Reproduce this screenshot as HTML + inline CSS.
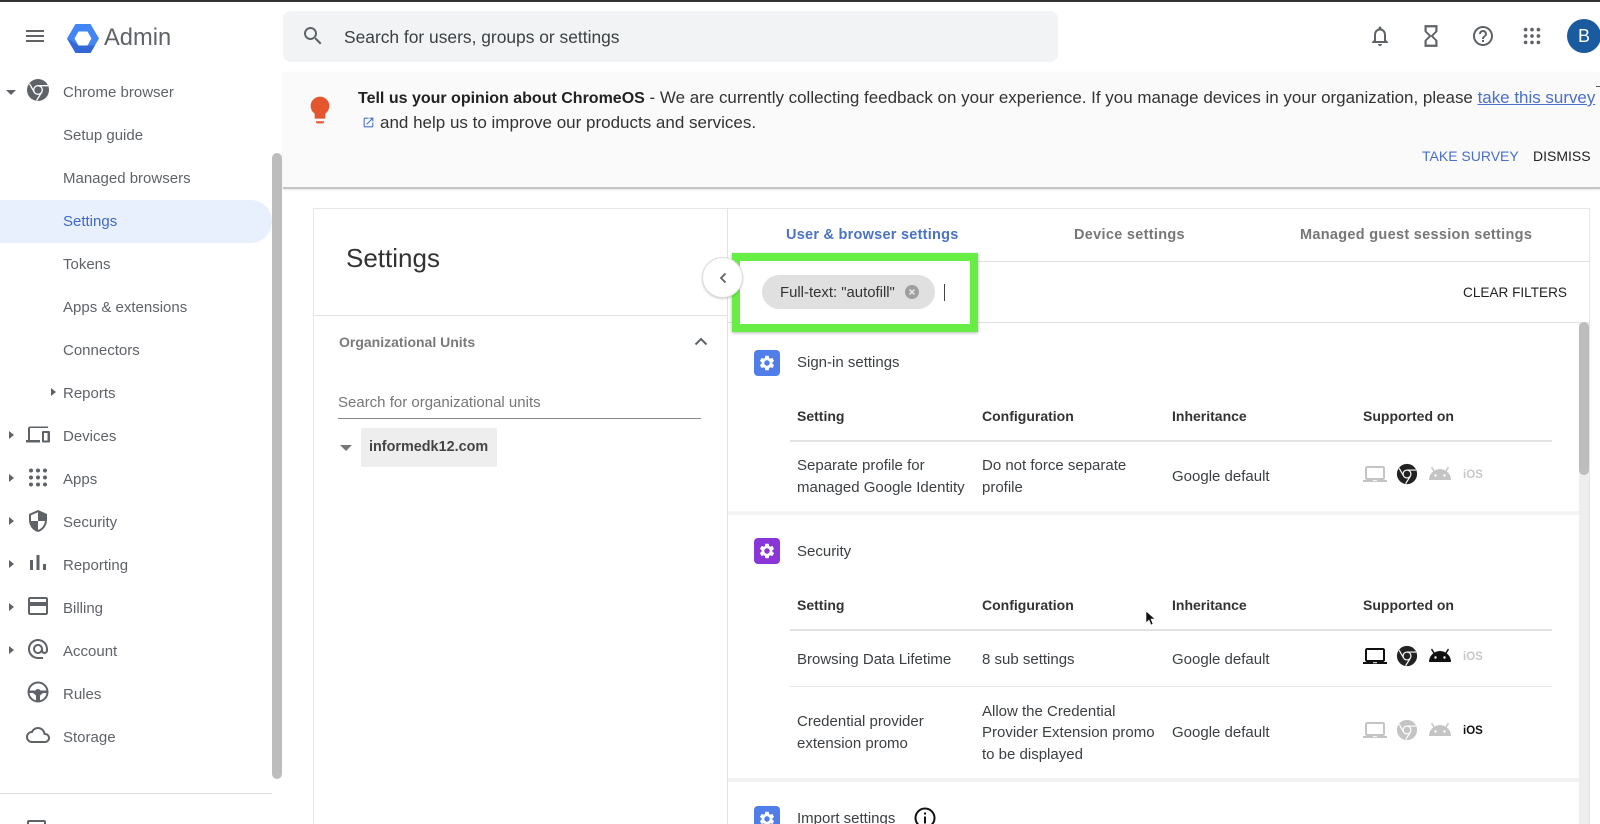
<!DOCTYPE html>
<html><head><meta charset="utf-8"><style>
html,body{margin:0;padding:0;background:#fff}
#p{position:relative;width:1600px;height:824px;overflow:hidden;background:#fff;font-family:"Liberation Sans",sans-serif;color:#444;filter:blur(.3px)}
#p div,#p span.t,#p svg{position:absolute}
.t{white-space:nowrap;line-height:20px;height:20px}
.n{font-size:15px;color:#5f6368;left:63px}
.b{font-size:15px;color:#3c4043;margin-top:1px}
.h{font-size:14px;font-weight:bold;color:#333}
.g{fill:#5f6368}
</style></head><body><div id="p">
<svg width="0" height="0"><defs>
<symbol id="gear" viewBox="0 0 24 24"><path fill="#fff" d="M19.14 12.94c.04-.3.06-.61.06-.94 0-.32-.02-.64-.07-.94l2.03-1.58c.18-.14.23-.41.12-.61l-1.92-3.32c-.12-.22-.37-.29-.59-.22l-2.39.96c-.5-.38-1.03-.7-1.62-.94l-.36-2.54c-.04-.24-.24-.41-.48-.41h-3.84c-.24 0-.43.17-.47.41l-.36 2.54c-.59.24-1.13.57-1.62.94l-2.39-.96c-.22-.08-.47 0-.59.22L2.74 8.87c-.12.21-.08.47.12.61l2.03 1.58c-.05.3-.09.63-.09.94s.02.64.07.94l-2.03 1.58c-.18.14-.23.41-.12.61l1.92 3.32c.12.22.37.29.59.22l2.39-.96c.5.38 1.03.7 1.62.94l.36 2.54c.05.24.24.41.48.41h3.84c.24 0 .44-.17.47-.41l.36-2.54c.59-.24 1.13-.56 1.62-.94l2.39.96c.22.08.47 0 .59-.22l1.92-3.32c.12-.22.07-.47-.12-.61l-2.01-1.58zM12 15.6c-1.98 0-3.6-1.62-3.6-3.6s1.62-3.6 3.6-3.6 3.6 1.62 3.6 3.6-1.62 3.6-3.6 3.6z"/></symbol>
<symbol id="chrome" viewBox="0 0 24 24"><circle cx="12" cy="12" r="11"/><circle cx="12" cy="12" r="4.3" fill="none" stroke="#fff" stroke-width="1.3"/><path d="M12 7.7H22M8.3 14.2L3.5 5.8M15.7 14.2L10.5 22.6" stroke="#fff" stroke-width="1.3" fill="none"/></symbol>
<symbol id="laptop" viewBox="0 0 24 24"><path d="M20 18c1.1 0 2-.9 2-2V6c0-1.1-.9-2-2-2H4c-1.1 0-2 .9-2 2v10c0 1.1.9 2 2 2H0v2h24v-2h-4zM4 6h16v10H4V6z"/><rect x="10" y="18.2" width="4" height="1" fill="#fff"/></symbol>
<symbol id="android" viewBox="0 0 24 24"><path d="M1 19a11 11 0 0 1 22 0z"/><path d="M6 10L3.5 6M18 10l2.500-4" stroke="currentColor" stroke-width="1.5"/><circle cx="7.500" cy="14.500" r="1.200" fill="#fff"/><circle cx="16.500" cy="14.500" r="1.200" fill="#fff"/></symbol>
</defs></svg>

<div style="left:0;top:0;width:1600px;height:2px;background:#333"></div>

<!-- top bar -->
<svg style="left:23px;top:24px" width="24" height="24" viewBox="0 0 24 24"><path class="g" d="M3 18h18v-2H3v2zm0-5h18v-2H3v2zm0-7v2h18V6H3z"/></svg>
<svg style="left:67px;top:24px" width="32" height="29" viewBox="0 0 32 29"><path d="M8.500 0H23.500L32 14.500 23.500 29H8.500L0 14.500z" fill="#4285f4"/><path d="M0 14.500L8.500 29H23.500L28 21.500H12z" fill="#3367d6"/><path d="M11.500 7.500H20.500L24.500 14.500 20.500 21.500H11.500L7.500 14.500z" fill="#fff"/></svg>
<span class="t" style="left:104px;top:25px;height:26px;line-height:26px;font-size:23.700px;color:#5f6368">Admin</span>
<div style="left:283px;top:11px;width:775px;height:51px;background:#f1f3f4;border-radius:8px"></div>
<svg style="left:301px;top:24px" width="24" height="24" viewBox="0 0 24 24"><path class="g" d="M15.500 14h-.79l-.28-.27C15.410 12.590 16 11.110 16 9.500 16 5.910 13.090 3 9.500 3S3 5.910 3 9.500 5.910 16 9.500 16c1.610 0 3.090-.59 4.230-1.570l.27.28v.79l5 4.990L20.490 19l-4.990-5zm-6 0C7.010 14 5 11.990 5 9.500S7.010 5 9.500 5 14 7.010 14 9.500 11.990 14 9.500 14z"/></svg>
<span class="t" style="left:344px;top:27px;font-size:17.400px;color:#3c4043">Search for users, groups or settings</span>
<svg style="left:1368px;top:24px" width="24" height="24" viewBox="0 0 24 24"><path class="g" d="M12 22c1.100 0 2-.9 2-2h-4c0 1.100.9 2 2 2zm6-6v-5c0-3.070-1.630-5.640-4.500-6.320V4c0-.83-.67-1.500-1.500-1.500s-1.500.67-1.500 1.500v.68C7.640 5.360 6 7.920 6 11v5l-2 2v1h16v-1l-2-2zm-2 1H8v-6c0-2.480 1.510-4.500 4-4.500s4 2.020 4 4.500v6z"/></svg>
<svg style="left:1418px;top:23px" width="26" height="26" viewBox="0 0 24 24"><path class="g" d="M6 2v6h.01L6 8.010 10 12l-4 4 .01.01H6V22h12v-5.990h-.01L18 16l-4-4 4-3.990-.01-.01H18V2H6zm10 14.500V20H8v-3.500l4-4 4 4zm-4-5l-4-4V4h8v3.500l-4 4z"/></svg>
<svg style="left:1471px;top:24px" width="24" height="24" viewBox="0 0 24 24"><path class="g" d="M11 18h2v-2h-2v2zm1-16C6.480 2 2 6.480 2 12s4.480 10 10 10 10-4.480 10-10S17.520 2 12 2zm0 18c-4.410 0-8-3.590-8-8s3.590-8 8-8 8 3.590 8 8-3.590 8-8 8zm0-14c-2.210 0-4 1.790-4 4h2c0-1.100.9-2 2-2s2 .9 2 2c0 2-3 1.750-3 5h2c0-2.250 3-2.500 3-5 0-2.210-1.790-4-4-4z"/></svg>
<svg style="left:1521px;top:25px" width="22" height="22" viewBox="0 0 24 24"><g class="g"><circle cx="5" cy="5" r="2"/><circle cx="12" cy="5" r="2"/><circle cx="19" cy="5" r="2"/><circle cx="5" cy="12" r="2"/><circle cx="12" cy="12" r="2"/><circle cx="19" cy="12" r="2"/><circle cx="5" cy="19" r="2"/><circle cx="12" cy="19" r="2"/><circle cx="19" cy="19" r="2"/></g></svg>
<div style="left:1567px;top:19px;width:34px;height:34px;border-radius:50%;background:#1a5a9e;color:#fff;font-size:18px;line-height:34px;text-align:center">B</div>

<!-- sidebar -->
<div style="left:0;top:200px;width:272px;height:43px;background:#e8f0fe;border-radius:0 22px 22px 0"></div>
<div style="left:272px;top:153px;width:10px;height:626px;background:#bdbdbd;border-radius:5px"></div>
<div style="left:0;top:793px;width:272px;height:1px;background:#e3e3e3"></div>
<div style="left:6px;top:90px;width:0;height:0;border:5px solid transparent;border-top-color:#5f6368"></div>
<svg style="left:26px;top:78px;color:#5f6368;fill:#5f6368" width="24" height="24"><use href="#chrome"/></svg>
<span class="t n" style="top:83px">Chrome browser</span>
<span class="t n" style="top:126px">Setup guide</span>
<span class="t n" style="top:169px">Managed browsers</span>
<span class="t n" style="top:212px;color:#3f68c8;font-weight:500">Settings</span>
<span class="t n" style="top:255px">Tokens</span>
<span class="t n" style="top:298px">Apps &amp; extensions</span>
<span class="t n" style="top:341px">Connectors</span>
<div style="left:51px;top:388px;width:0;height:0;border:4.500px solid transparent;border-left:5px solid #5f6368;border-right:0"></div>
<span class="t n" style="top:384px">Reports</span>
<div style="left:9px;top:431px;width:0;height:0;border:4.500px solid transparent;border-left:5px solid #5f6368;border-right:0"></div>
<div style="left:9px;top:474px;width:0;height:0;border:4.500px solid transparent;border-left:5px solid #5f6368;border-right:0"></div>
<div style="left:9px;top:517px;width:0;height:0;border:4.500px solid transparent;border-left:5px solid #5f6368;border-right:0"></div>
<div style="left:9px;top:560px;width:0;height:0;border:4.500px solid transparent;border-left:5px solid #5f6368;border-right:0"></div>
<div style="left:9px;top:603px;width:0;height:0;border:4.500px solid transparent;border-left:5px solid #5f6368;border-right:0"></div>
<div style="left:9px;top:646px;width:0;height:0;border:4.500px solid transparent;border-left:5px solid #5f6368;border-right:0"></div>
<span class="t n" style="top:427px">Devices</span>
<span class="t n" style="top:470px">Apps</span>
<span class="t n" style="top:513px">Security</span>
<span class="t n" style="top:556px">Reporting</span>
<span class="t n" style="top:599px">Billing</span>
<span class="t n" style="top:642px">Account</span>
<span class="t n" style="top:685px">Rules</span>
<span class="t n" style="top:728px">Storage</span>
<svg style="left:26px;top:423px" width="24" height="24" viewBox="0 0 24 24"><path class="g" d="M4 5h18V3.500H4c-1.100 0-2 .9-2 2V17H0v2.500h14V17H4V5zm19 3h-6c-.55 0-1 .45-1 1v9.500c0 .55.45 1 1 1h6c.55 0 1-.45 1-1V9c0-.55-.45-1-1-1zm-1.500 9.500h-3.500V10h3.500v7.500z"/></svg>
<svg style="left:26px;top:467px" width="24" height="24" viewBox="0 0 24 24"><g class="g"><circle cx="5" cy="3.500" r="2"/><circle cx="12" cy="3.500" r="2"/><circle cx="19" cy="3.500" r="2"/><circle cx="5" cy="10.500" r="2"/><circle cx="12" cy="10.500" r="2"/><circle cx="19" cy="10.500" r="2"/><circle cx="5" cy="17.500" r="2"/><circle cx="12" cy="17.500" r="2"/><circle cx="19" cy="17.500" r="2"/></g></svg>
<svg style="left:26px;top:509px" width="24" height="24" viewBox="0 0 24 24"><path class="g" d="M12 1L3 5v6c0 5.550 3.840 10.740 9 12 5.160-1.260 9-6.450 9-12V5l-9-4zm0 10.990h7c-.53 4.120-3.280 7.790-7 8.940V12H5V6.300l7-3.110v8.800z"/></svg>
<svg style="left:26px;top:552px" width="24" height="24" viewBox="0 0 24 24"><g class="g"><rect x="4" y="8" width="3" height="10"/><rect x="10.500" y="3" width="3" height="15"/><rect x="17" y="12" width="3" height="6"/></g></svg>
<svg style="left:26px;top:595px" width="24" height="24" viewBox="0 0 24 24"><path class="g" d="M20 2H4C2.890 2 2.010 2.890 2.010 4L2 18c0 1.110.89 2 2 2h16c1.110 0 2-.89 2-2V4c0-1.110-.89-2-2-2zm0 16H4v-7h16v7zm0-11H4V4h16v3z"/></svg>
<svg style="left:26px;top:637px" width="24" height="24" viewBox="0 0 24 24"><path class="g" d="M12 2C6.480 2 2 6.480 2 12s4.480 10 10 10h5v-2h-5c-4.340 0-8-3.660-8-8s3.660-8 8-8 8 3.660 8 8v1.430c0 .79-.71 1.570-1.500 1.570s-1.500-.78-1.500-1.570V12c0-2.760-2.240-5-5-5s-5 2.240-5 5 2.240 5 5 5c1.380 0 2.640-.56 3.540-1.470.65.89 1.770 1.470 2.960 1.470 1.970 0 3.500-1.600 3.500-3.570V12c0-5.520-4.480-10-10-10zm0 13c-1.660 0-3-1.340-3-3s1.340-3 3-3 3 1.340 3 3-1.340 3-3 3z"/></svg>
<svg style="left:26px;top:680px" width="24" height="24" viewBox="0 0 24 24"><circle cx="12" cy="12" r="9.500" fill="none" stroke="#5f6368" stroke-width="2"/><path class="g" d="M3 10.500h18v2.500h-4l-3 2.500V21h-4v-5.500L7 13H3z"/><circle cx="12" cy="12" r="3" class="g"/></svg>
<svg style="left:26px;top:723px" width="24" height="24" viewBox="0 0 24 24"><path class="g" d="M19.350 10.040C18.670 6.590 15.640 4 12 4 9.110 4 6.600 5.640 5.350 8.040 2.340 8.360 0 10.910 0 14c0 3.310 2.690 6 6 6h13c2.760 0 5-2.240 5-5 0-2.640-2.050-4.780-4.650-4.960zM19 18H6c-2.210 0-4-1.790-4-4 0-2.050 1.530-3.760 3.560-3.970l1.070-.11.5-.95C8.080 7.140 9.940 6 12 6c2.620 0 4.880 1.860 5.390 4.430l.3 1.500 1.530.11c1.560.1 2.780 1.410 2.780 2.960 0 1.650-1.350 3-3 3z"/></svg>
<div style="left:27px;top:820px;width:19px;height:10px;border:2px solid #5f6368;box-sizing:border-box;border-radius:2px"></div>

<!-- banner -->
<div style="left:283px;top:72px;width:1317px;height:115px;background:#fafafa;border-bottom:2px solid #c4c4c4;box-shadow:0 1px 2px rgba(0,0,0,.1)"></div>
<svg style="left:304px;top:94px" width="32" height="32" viewBox="0 0 24 24"><path fill="#e4572e" d="M9 21c0 .5.4 1 1 1h4c.6 0 1-.5 1-1v-.6H9v.6zm3-19C8.100 2 5 5.100 5 9c0 2.400 1.200 4.500 3 5.700V18.500h8v-3.800c1.800-1.200 3-3.300 3-5.700 0-3.900-3.100-7-7-7z"/></svg>
<span class="t" style="left:358px;top:88px;font-size:16.970px;color:#333"><b style="color:#222;font-size:16px">Tell us your opinion about ChromeOS</b> - We are currently collecting feedback on your experience. If you manage devices in your organization, please <span style="color:#4a6fc9;text-decoration:underline">take this survey</span></span>
<div style="left:1596px;top:86px;width:4px;height:1px;background:#555"></div>
<svg style="left:362px;top:116px" width="13" height="13" viewBox="0 0 24 24"><path fill="#4a6fc9" d="M19 19H5V5h7V3H5c-1.110 0-2 .9-2 2v14c0 1.100.89 2 2 2h14c1.100 0 2-.9 2-2v-7h-2v7zM14 3v2h3.590l-9.830 9.830 1.410 1.410L19 6.410V10h2V3h-7z"/></svg>
<span class="t" style="left:380px;top:113px;font-size:17px;color:#333">and help us to improve our products and services.</span>
<span class="t" style="left:1422px;top:146px;font-size:14px;font-weight:500;color:#4a6fc9">TAKE SURVEY</span>
<span class="t" style="left:1533px;top:146px;font-size:14px;color:#222">DISMISS</span>

<!-- main panel -->
<div style="left:313px;top:208px;width:1277px;height:640px;border:1px solid #e6e6e6;box-sizing:border-box;background:#fff"></div>
<div style="left:727px;top:208px;width:1px;height:616px;background:#e2e2e2"></div>
<span class="t" style="left:346px;top:244px;height:28px;line-height:28px;font-size:26px;color:#333">Settings</span>
<div style="left:313px;top:315px;width:414px;height:1px;background:#e2e2e2"></div>
<span class="t" style="left:339px;top:332px;font-size:14px;font-weight:bold;color:#7a7a7a;">Organizational Units</span>
<svg style="left:689px;top:330px" width="24" height="24" viewBox="0 0 24 24"><path fill="none" stroke="#5f6368" stroke-width="2" d="M6.500 14.500L12 9l5.500 5.500"/></svg>
<span class="t" style="left:338px;top:393px;font-size:15px;color:#777">Search for organizational units</span>
<div style="left:338px;top:418px;width:363px;height:1px;background:#888"></div>
<div style="left:340px;top:445px;width:0;height:0;border:6px solid transparent;border-top:6px solid #777;border-bottom:0"></div>
<div style="left:361px;top:428px;width:136px;height:39px;background:#eee;border-radius:2px"></div>
<span class="t" style="left:369px;top:437px;font-size:14.400px;font-weight:bold;color:#444">informedk12.com</span>

<!-- tabs -->
<span class="t" style="left:786px;top:225px;font-size:14.500px;font-weight:bold;color:#4a73c4;letter-spacing:.25px">User &amp; browser settings</span>
<span class="t" style="left:1074px;top:225px;font-size:14.500px;font-weight:bold;color:#777;letter-spacing:.3px">Device settings</span>
<span class="t" style="left:1300px;top:225px;font-size:14.500px;font-weight:bold;color:#777;letter-spacing:.3px">Managed guest session settings</span>
<div style="left:728px;top:261px;width:862px;height:1px;background:#e2e2e2"></div>
<div style="left:728px;top:322px;width:862px;height:1px;background:#e2e2e2"></div>
<span class="t" style="left:1463px;top:283px;font-size:13.600px;color:#222">CLEAR FILTERS</span>

<!-- green box + chip -->
<div style="left:732px;top:253px;width:246px;height:79px;box-sizing:border-box;border:8px solid #66ee44;background:#fff;box-shadow:0 1px 3px rgba(0,0,0,.3)"></div>
<div style="left:702px;top:257px;width:41px;height:41px;border-radius:50%;background:#fff;border:1px solid #ddd;box-sizing:border-box;box-shadow:0 1px 2px rgba(0,0,0,.2)"></div>
<svg style="left:711px;top:266px" width="24" height="24" viewBox="0 0 24 24"><path fill="none" stroke="#5f6368" stroke-width="1.800" d="M14.500 7.500L10 12l4.500 4.500"/></svg>
<div style="left:762px;top:275px;width:173px;height:34px;border-radius:17px;background:#e0e0e0"></div>
<span class="t" style="left:780px;top:283px;font-size:14.900px;color:#333">Full-text: "autofill"</span>
<svg style="left:904px;top:284px" width="16" height="16" viewBox="0 0 16 16"><circle cx="8" cy="8" r="7" fill="#9e9e9e"/><path d="M5.500 5.500l5 5M10.500 5.500l-5 5" stroke="#e8e8e8" stroke-width="1.500"/></svg>
<div style="left:944px;top:284px;width:1px;height:17px;background:#444"></div>

<!-- section: sign-in -->
<div style="left:754px;top:350px;width:26px;height:26px;background:#4f7ee8;border-radius:4px"></div>
<svg style="left:758px;top:354px" width="18" height="18"><use href="#gear"/></svg>
<span class="t b" style="left:797px;top:352px">Sign-in settings</span>
<span class="t h" style="left:797px;top:406px">Setting</span>
<span class="t h" style="left:982px;top:406px">Configuration</span>
<span class="t h" style="left:1172px;top:406px">Inheritance</span>
<span class="t h" style="left:1363px;top:406px">Supported on</span>
<div style="left:790px;top:440px;width:762px;height:2px;background:#e2e2e2"></div>
<span class="t b" style="left:797px;top:455px">Separate profile for</span>
<span class="t b" style="left:797px;top:477px">managed Google Identity</span>
<span class="t b" style="left:982px;top:455px">Do not force separate</span>
<span class="t b" style="left:982px;top:477px">profile</span>
<span class="t b" style="left:1172px;top:466px">Google default</span>
<svg style="left:1363px;top:462px;fill:#c4c4c4" width="24" height="24"><use href="#laptop"/></svg>
<svg style="left:1396px;top:463px;fill:#222" width="22" height="22"><use href="#chrome"/></svg>
<svg style="left:1428px;top:461px;fill:#c4c4c4;color:#c4c4c4" width="24" height="24"><use href="#android"/></svg>
<span class="t" style="left:1463px;top:465px;font-size:11.500px;font-weight:bold;color:#c8c8c8">iOS</span>
<div style="left:728px;top:511px;width:851px;height:4px;background:#f4f4f4"></div>

<!-- section: security -->
<div style="left:754px;top:538px;width:26px;height:26px;background:#8a35d8;border-radius:4px"></div>
<svg style="left:758px;top:542px" width="18" height="18"><use href="#gear"/></svg>
<span class="t b" style="left:797px;top:541px">Security</span>
<span class="t h" style="left:797px;top:595px">Setting</span>
<span class="t h" style="left:982px;top:595px">Configuration</span>
<span class="t h" style="left:1172px;top:595px">Inheritance</span>
<span class="t h" style="left:1363px;top:595px">Supported on</span>
<div style="left:790px;top:629px;width:762px;height:2px;background:#e2e2e2"></div>
<span class="t b" style="left:797px;top:649px">Browsing Data Lifetime</span>
<span class="t b" style="left:982px;top:649px">8 sub settings</span>
<span class="t b" style="left:1172px;top:649px">Google default</span>
<svg style="left:1363px;top:644px;fill:#111" width="24" height="24"><use href="#laptop"/></svg>
<svg style="left:1396px;top:645px;fill:#222" width="22" height="22"><use href="#chrome"/></svg>
<svg style="left:1428px;top:643px;fill:#111;color:#111" width="24" height="24"><use href="#android"/></svg>
<span class="t" style="left:1463px;top:647px;font-size:11.500px;font-weight:bold;color:#c8c8c8">iOS</span>
<div style="left:790px;top:686px;width:762px;height:1px;background:#e6e6e6"></div>
<span class="t b" style="left:797px;top:711px">Credential provider</span>
<span class="t b" style="left:797px;top:733px">extension promo</span>
<span class="t b" style="left:982px;top:701px">Allow the Credential</span>
<span class="t b" style="left:982px;top:722px">Provider Extension promo</span>
<span class="t b" style="left:982px;top:744px">to be displayed</span>
<span class="t b" style="left:1172px;top:722px">Google default</span>
<svg style="left:1363px;top:718px;fill:#c4c4c4" width="24" height="24"><use href="#laptop"/></svg>
<svg style="left:1396px;top:719px;fill:#c4c4c4" width="22" height="22"><use href="#chrome"/></svg>
<svg style="left:1428px;top:717px;fill:#c4c4c4;color:#c4c4c4" width="24" height="24"><use href="#android"/></svg>
<span class="t" style="left:1463px;top:721px;font-size:11.500px;font-weight:bold;color:#111">iOS</span>
<div style="left:728px;top:778px;width:851px;height:4px;background:#f2f2f2"></div>

<!-- section: import -->
<div style="left:754px;top:806px;width:26px;height:26px;background:#4f7ee8;border-radius:4px"></div>
<svg style="left:758px;top:810px" width="18" height="18"><use href="#gear"/></svg>
<span class="t b" style="left:797px;top:808px">Import settings</span>
<svg style="left:913px;top:806px" width="24" height="24" viewBox="0 0 24 24"><circle cx="12" cy="12" r="9.500" fill="none" stroke="#111" stroke-width="2"/><rect x="11" y="10.500" width="2" height="7" fill="#111"/><rect x="11" y="6.500" width="2" height="2" fill="#111"/></svg>

<!-- cursor + scrollbar -->
<svg style="left:1145px;top:610px" width="12" height="18" viewBox="0 0 12 18"><path d="M1 1v12l3-3 2 5 2-1-2-5h4z" fill="#111" stroke="#fff" stroke-width=".6"/></svg>
<div style="left:1579px;top:322px;width:10px;height:502px;background:#eee"></div>
<div style="left:1579px;top:322px;width:10px;height:153px;background:#bdbdbd;border-radius:5px"></div>
</div></body></html>
